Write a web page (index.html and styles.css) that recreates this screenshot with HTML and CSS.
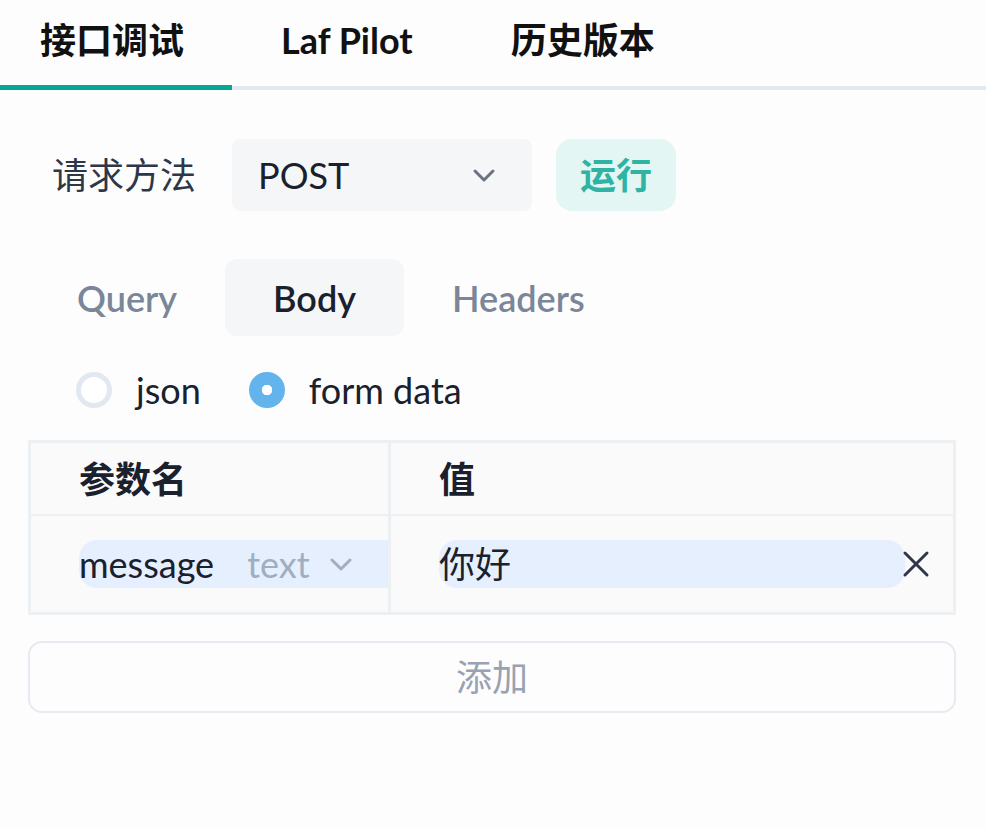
FILE: index.html
```html
<!DOCTYPE html>
<html lang="zh-CN">
<head>
<meta charset="utf-8">
<title>接口调试</title>
<link rel="stylesheet" href="styles.css">
</head>
<body>
<div class="tabs">
  <div class="tab active">接口调试</div>
  <div class="tab">Laf Pilot</div>
  <div class="tab">历史版本</div>
</div>
<div class="panel">
  <div class="method-row">
    <span class="label">请求方法</span>
    <div class="select">
      <span>POST</span>
      <svg class="chev" width="24" height="15" viewBox="0 0 24 15"><polyline points="3,3 12,12 21,3" fill="none" stroke="currentColor" stroke-width="3" stroke-linecap="round" stroke-linejoin="round"/></svg>
    </div>
    <div class="run">运行</div>
  </div>
  <div class="sub-tabs">
    <div class="sub-tab">Query</div>
    <div class="sub-tab selected">Body</div>
    <div class="sub-tab">Headers</div>
  </div>
  <div class="radios">
    <label class="radio"><span class="dot"></span><span>json</span></label>
    <label class="radio checked"><span class="dot"></span><span>form data</span></label>
  </div>
  <div class="params">
    <div class="cell head name-col">参数名</div>
    <div class="cell head">值</div>
    <div class="cell body name-col clip">
      <div class="field name-field">
        <span class="val">message</span>
        <span class="type">text</span>
        <svg class="type-chev" width="24" height="15" viewBox="0 0 24 15"><polyline points="3,3 12,12 21,3" fill="none" stroke="currentColor" stroke-width="3" stroke-linecap="round" stroke-linejoin="round"/></svg>
      </div>
    </div>
    <div class="cell body value-cell">
      <div class="field value-field"><span class="val">你好</span></div>
      <svg class="close" width="28" height="28" viewBox="0 0 28 28"><path d="M3 3 L25 25 M25 3 L3 25" fill="none" stroke="currentColor" stroke-width="3" stroke-linecap="round"/></svg>
    </div>
  </div>
  <div class="add">添加</div>
</div>
</body>
</html>
```

FILE: styles.css
```css
* { box-sizing: border-box; }
html, body {
  margin: 0;
  background: #fdfdfd;
}
body {
  font-family: "Lato", "Noto Sans CJK SC", sans-serif;
  font-size: 36px;
  color: #1a202c;
  width: 986px;
  height: 828px;
  overflow: hidden;
}
.tabs {
  display: flex;
  border-bottom: 4px solid #e2e8f0;
}
.tab {
  height: 86px;
  padding: 0 49px 6px;
  display: flex;
  align-items: center;
  font-weight: 700;
  color: #111;
  line-height: 1;
}
.tab.active {
  height: 90px;
  margin-bottom: -4px;
  padding: 0 48px 5px 40px;
  border-bottom: 5px solid #04a696;
}
.panel {
  padding: 0 30px 0 28px;
}
.method-row {
  margin-top: 49px;
  display: flex;
  align-items: center;
  height: 72px;
  padding-left: 24px;
}
.label {
  color: #2d3748;
  margin-right: 36px;
  line-height: 1;
}
.select {
  width: 300px;
  height: 72px;
  background: #f4f6f8;
  border-radius: 8px;
  display: flex;
  align-items: center;
  justify-content: space-between;
  padding: 0 36px 0 26px;
  line-height: 1;
}
.chev { color: #6b7280; }
.run {
  margin-left: 24px;
  width: 120px;
  height: 72px;
  border-radius: 16px;
  background: #e4f6f3;
  color: #2fb3a2;
  font-weight: 700;
  display: flex;
  align-items: center;
  justify-content: center;
  line-height: 1;
}
.sub-tabs {
  margin-top: 48px;
  display: flex;
  padding-left: 1px;
}
.sub-tab {
  height: 77px;
  padding: 0 48px;
  border-radius: 12px;
  display: flex;
  align-items: center;
  font-weight: 600;
  color: #7a8699;
  line-height: 1;
}
.sub-tab.selected {
  background: #f4f6f8;
  color: #1a202c;
}
.radios {
  margin-top: 36px;
  height: 36px;
  display: flex;
  align-items: center;
  padding-left: 48px;
  gap: 48px;
}
.radio {
  display: flex;
  align-items: center;
  gap: 24px;
  line-height: 1;
}
.dot {
  width: 36px;
  height: 36px;
  border-radius: 50%;
  border: 5px solid #e2e8f0;
  background: #fff;
}
.radio.checked .dot {
  border-color: #63b3ed;
  background: radial-gradient(circle, #fff 0 5px, #63b3ed 5.5px);
}
.params {
  margin-top: 32px;
  display: grid;
  grid-template-columns: 360px 1fr;
  border: 3px solid #edf0f2;
  background: #fafafb;
}
.cell.head {
  height: 73px;
  padding-left: 48px;
  display: flex;
  align-items: center;
  font-weight: 700;
  border-bottom: 2px solid #eef0f2;
  line-height: 1;
}
.name-col { border-right: 3px solid #edf0f2; }
.cell.body {
  padding: 24px 0 24px 48px;
  display: flex;
  align-items: center;
}
.clip { overflow: hidden; }
.field {
  height: 48px;
  background: #e6effd;
  display: flex;
  align-items: center;
  line-height: 1;
}
.name-field {
  flex: 1;
  border-radius: 18px 0 0 18px;
}
.type {
  margin-left: 33px;
  color: #a0aec0;
}
.type-chev {
  margin-left: 19px;
  color: #a0aec0;
}
.value-cell { padding-right: 23px !important; }
.value-field {
  flex: 1;
  border-radius: 18px;
}
.close {
  margin-left: -3px;
  color: #2d3748;
  flex: none;
}
.add {
  margin-top: 26px;
  height: 72px;
  border: 2px solid #e6ebf1;
  border-radius: 14px;
  display: flex;
  align-items: center;
  justify-content: center;
  color: #98a2b3;
  line-height: 1;
}
```
